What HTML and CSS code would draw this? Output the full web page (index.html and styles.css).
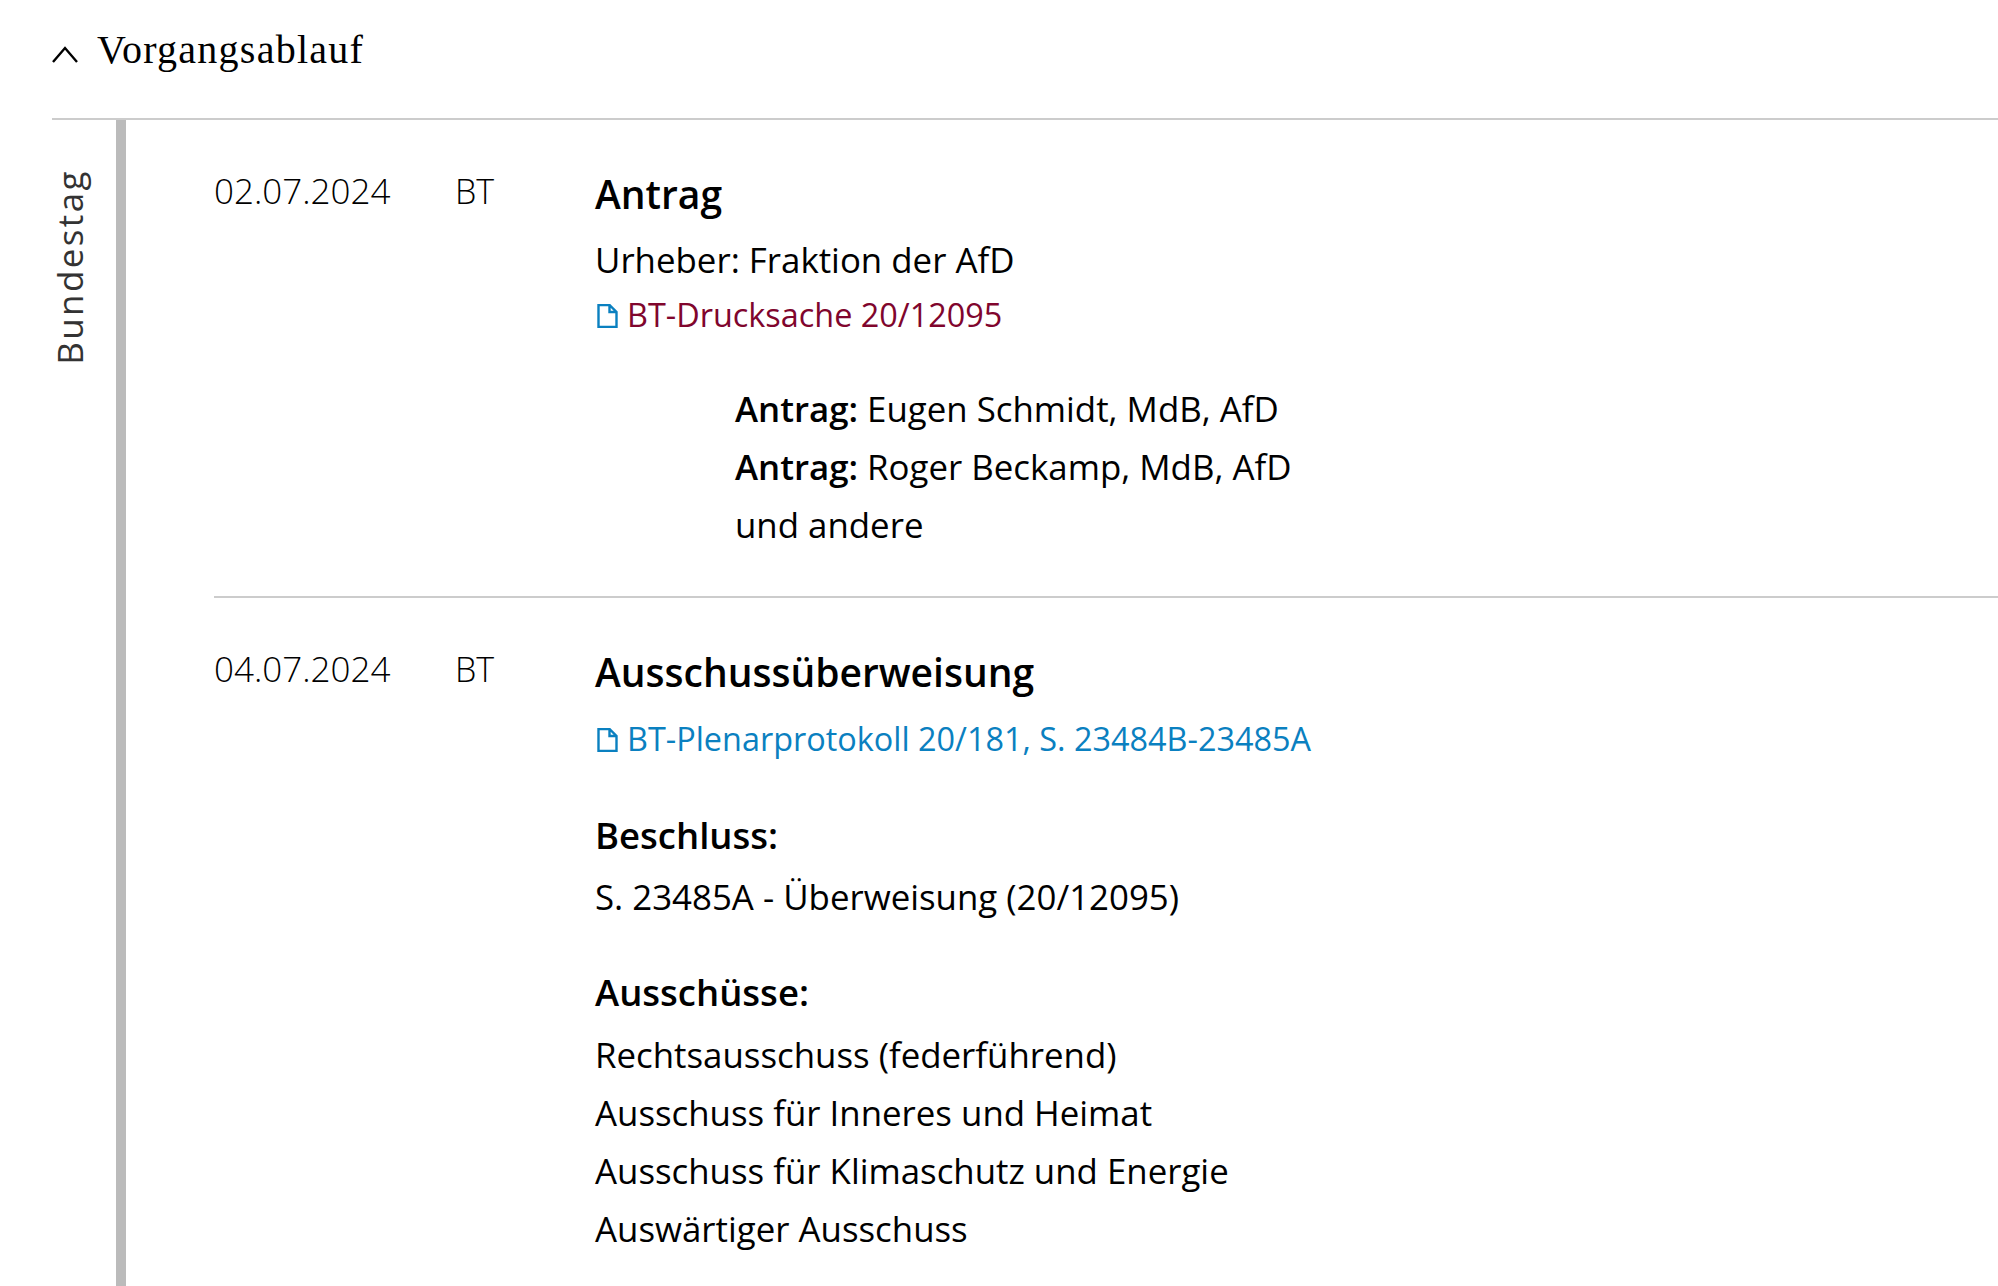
FILE: index.html
```html
<!DOCTYPE html>
<html lang="de">
<head>
<meta charset="utf-8">
<title>Vorgangsablauf</title>
<link rel="stylesheet" href="styles.css">
</head>
<body>
<section class="panel">
  <header class="panel-head">
    <svg class="chevron" viewBox="0 0 26 18" aria-hidden="true"><path d="M1 17 13 3l12 14"/></svg>
    <h2 class="panel-title">Vorgangsablauf</h2>
  </header>
  <div class="timeline">
    <div class="house"><span class="house-label">Bundestag</span></div>
    <div class="entries">
      <article class="entry">
        <div class="date">02.07.2024</div>
        <div class="org">BT</div>
        <div class="detail">
          <h3 class="title">Antrag</h3>
          <p class="line">Urheber: Fraktion der AfD</p>
          <a class="doc doc-current" href="#"><svg class="doc-icon" viewBox="0 0 20 24" aria-hidden="true"><path d="M1 1h11l7 7v15H1zM12 1v7h7"/></svg>BT-Drucksache 20/12095</a>
          <div class="speakers">
            <p class="line"><b>Antrag:</b> Eugen Schmidt, MdB, AfD</p>
            <p class="line"><b>Antrag:</b> Roger Beckamp, MdB, AfD</p>
            <p class="line">und andere</p>
          </div>
        </div>
      </article>
      <article class="entry">
        <div class="date">04.07.2024</div>
        <div class="org">BT</div>
        <div class="detail">
          <h3 class="title">Ausschussüberweisung</h3>
          <a class="doc doc-first" href="#"><svg class="doc-icon" viewBox="0 0 20 24" aria-hidden="true"><path d="M1 1h11l7 7v15H1zM12 1v7h7"/></svg>BT-Plenarprotokoll 20/181, S. 23484B-23485A</a>
          <h4 class="subhead">Beschluss:</h4>
          <p class="line">S. 23485A - Überweisung (20/12095)</p>
          <h4 class="subhead subhead-next">Ausschüsse:</h4>
          <p class="line">Rechtsausschuss (federführend)</p>
          <p class="line">Ausschuss für Inneres und Heimat</p>
          <p class="line">Ausschuss für Klimaschutz und Energie</p>
          <p class="line">Auswärtiger Ausschuss</p>
        </div>
      </article>
    </div>
  </div>
</section>
</body>
</html>
```
FILE: styles.css
```css
html, body {
  margin: 0;
  height: 100%;
  background: #fff;
  overflow: hidden;
}
body {
  font-family: "Open Sans", "Liberation Sans", sans-serif;
  font-size: 34.85px;
  color: #000;
}
.panel {
  display: flex;
  flex-direction: column;
  height: 100%;
  padding-left: 52px;
  box-sizing: border-box;
}
.panel-head {
  display: flex;
  align-items: center;
  gap: 19px;
  height: 118px;
  padding-bottom: 20px;
  box-sizing: border-box;
  flex: none;
}
.chevron {
  width: 26px;
  height: 18px;
  margin-top: 10px;
  fill: none;
  stroke: #000;
  stroke-width: 2.4;
}
.panel-title {
  margin: 0;
  font-family: "Liberation Serif", serif;
  font-size: 40px;
  font-weight: 400;
  letter-spacing: 1.25px;
}
.timeline {
  display: flex;
  flex: 1;
  border-top: 2px solid #ccc;
  min-height: 0;
}
.house {
  width: 64px;
  flex: none;
  padding-top: 49px;
}
.house-label {
  display: block;
  writing-mode: vertical-rl;
  transform: rotate(180deg);
  font-size: 35px;
  line-height: 36px;
  letter-spacing: 2.4px;
  color: #333;
  width: 36px;
}
.entries {
  flex: 1;
  border-left: 10px solid #bbb;
  padding-left: 88px;
}
.entry {
  display: grid;
  grid-template-columns: 241px 140px 1fr;
  padding: 42px 0 42px;
  border-bottom: 2px solid #ccc;
}
.entry:last-child {
  border-bottom: 0;
}
.date, .org {
  font-weight: 300;
  color: #000;
  line-height: 58px;
}
.date {
  font-size: 35px;
}
.org {
  font-size: 34px;
}
.title {
  margin: 0 0 5px;
  font-size: 39px;
  font-weight: 600;
  line-height: 64px;
}
.line {
  margin: 0;
  line-height: 58px;
}
.line b {
  font-weight: 600;
}
.doc {
  display: flex;
  align-items: center;
  gap: 9px;
  padding-left: 2px;
  font-size: 32.4px;
  line-height: 50px;
  color: #0a80c0;
  text-decoration: none;
}
.doc-current {
  color: #80052d;
}
.doc-first {
  margin-top: 9px;
}
.doc-icon {
  width: 21px;
  height: 24px;
  margin-top: 3px;
  fill: none;
  stroke: #0a80c0;
  stroke-width: 2.4;
}
.speakers {
  margin: 41px 0 0 140px;
}
.subhead {
  margin: 39px 0 0;
  font-size: 36.5px;
  font-weight: 600;
  line-height: 66px;
}
.subhead-next {
  margin: 33px 0 1px;
}
```
